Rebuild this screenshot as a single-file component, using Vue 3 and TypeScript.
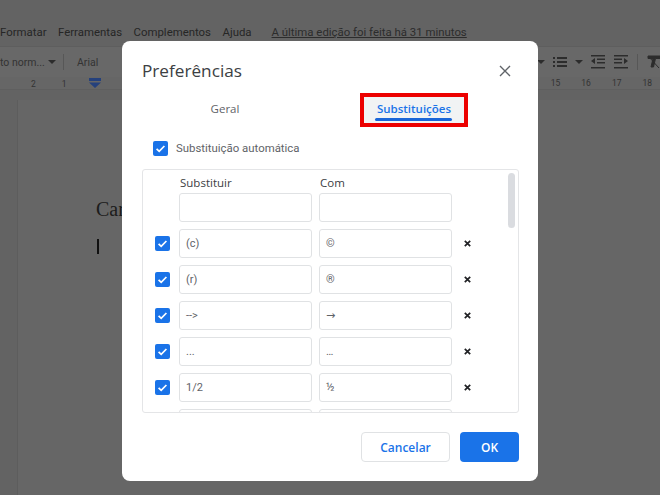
<script setup lang="ts">
const rows: { from: string; to: string }[] = [
  { from: '(c)', to: '©' },
  { from: '(r)', to: '®' },
  { from: '-->', to: '→' },
  { from: '...', to: '…' },
  { from: '1/2', to: '½' },
  { from: '', to: '' },
]
const menu = ['Formatar', 'Ferramentas', 'Complementos', 'Ajuda']
const leftTicks = ['2', '1']
const rightTicks = ['15', '16', '17', '18']
</script>

<template>
  <div class="page">
    <div class="topbar">
      <div class="menu">
        <span v-for="m in menu" :key="m">{{ m }}</span>
        <span class="edit">A última edição foi feita há 31 minutos</span>
      </div>
    </div>
    <div class="toolbar">
      <span class="style">to norm...</span>
      <span class="caret"></span>
      <span class="sep"></span>
      <span class="font">Arial</span>
      <div class="tools">
        <span class="caret"></span>
        <svg width="16" height="14" viewBox="0 0 16 14"><path d="M1 2h2v2H1zM1 6h2v2H1zM1 10h2v2H1zM5 2h10v2H5zM5 6h10v2H5zM5 10h10v2H5z" fill="#2c2c2c"/></svg>
        <span class="caret"></span>
        <svg width="16" height="14" viewBox="0 0 16 14"><path d="M1 0h14v1.500H1zM7 3.500h8V5H7zM7 7h8v1.500H7zM1 12h14v1.500H1zM5 3v6L1 6z" fill="#2c2c2c"/></svg>
        <svg width="16" height="14" viewBox="0 0 16 14"><path d="M1 0h14v1.500H1zM1 3.500h8V5H1zM1 7h8v1.500H1zM1 12h14v1.500H1zM11 3v6l4-3z" fill="#2c2c2c"/></svg>
        <span class="sep"></span>
        <svg width="16" height="14" viewBox="0 0 16 14"><path d="M2 1h12v2.500H9.500L7.500 12H5l2-8.500H2zM3 2l10 11" fill="#2c2c2c" stroke="#2c2c2c"/></svg>
      </div>
    </div>
    <div class="ruler">
      <div class="ticks left">
        <span v-for="t in leftTicks" :key="t">{{ t }}</span>
      </div>
      <svg class="marker" width="12" height="10" viewBox="0 0 12 10"><path d="M0 0h12v3H0zM0 4.500h12L6 10z" fill="#25417c"/></svg>
      <div class="ticks right">
        <svg class="marker-right" width="12" height="10" viewBox="0 0 12 10"><path d="M0 3h12L6 10z" fill="#25417c"/></svg>
        <span v-for="t in rightTicks" :key="t">{{ t }}</span>
      </div>
    </div>
    <div class="workspace">
      <div class="sheet">
        <p class="doc-title">Caro</p>
        <span class="cursor"></span>
      </div>
    </div>

    <section class="dialog">
      <header class="dialog-head">
        <h1>Preferências</h1>
        <svg class="close" width="12" height="12" viewBox="0 0 12 12"><path d="M1 1l10 10M11 1L1 11" stroke="#5f6368" stroke-width="1.400" fill="none"/></svg>
      </header>
      <nav class="tabs">
        <div class="tab">Geral</div>
        <div class="tab active">
          <span>Substituições</span>
          <i class="line"></i>
          <i class="highlight"></i>
        </div>
      </nav>
      <label class="auto">
        <span class="check"><svg width="15" height="15" viewBox="0 0 15 15"><path d="M3.600 7.800l2.600 2.600 5.200-5.400" stroke="#fff" stroke-width="1.700" fill="none"/></svg></span>
        <span>Substituição automática</span>
      </label>
      <div class="list">
        <div class="row head">
          <span class="cell-check"></span>
          <span class="col">Substituir</span>
          <span class="col">Com</span>
        </div>
        <div class="row">
          <span class="cell-check"></span>
          <div class="field"></div>
          <div class="field"></div>
        </div>
        <div v-for="(r, i) in rows" :key="i" class="row">
          <span class="cell-check">
            <span v-if="i < 5" class="check"><svg width="15" height="15" viewBox="0 0 15 15"><path d="M3.600 7.800l2.600 2.600 5.200-5.400" stroke="#fff" stroke-width="1.700" fill="none"/></svg></span>
          </span>
          <div class="field">{{ r.from }}</div>
          <div class="field">{{ r.to }}</div>
          <svg v-if="i < 5" class="remove" width="7" height="7" viewBox="0 0 7 7"><path d="M.8.800l5.400 5.400M6.200.800L.8 6.200" stroke="#202124" stroke-width="1.700" fill="none"/></svg>
        </div>
        <i class="scrollbar"></i>
      </div>
      <footer class="actions">
        <button class="btn cancel">Cancelar</button>
        <button class="btn ok">OK</button>
      </footer>
    </section>
  </div>
</template>

<style>
html, body { margin: 0; background: #666; }
</style>

<style scoped>
.page {
  position: relative;
  width: 660px;
  height: 495px;
  overflow: hidden;
  background: #666;
  font-family: Roboto, "Liberation Sans", sans-serif;
  color: #2b2b2b;
}
.topbar { height: 46px; background: #636363; box-sizing: border-box; padding-top: 24px; }
.menu { display: flex; font-size: 11.400px; line-height: 16px; color: #262626; }
.menu span { margin-right: 11.500px; }
.menu .edit { margin-left: 8.500px; text-decoration: underline; color: #2c2c2c; }
.toolbar {
  height: 31px;
  background: #686868;
  border-top: 1px solid #5e5e5e;
  box-sizing: border-box;
  display: flex;
  align-items: center;
  font-size: 10.500px;
  color: #333;
}
.style { width: 48px; white-space: nowrap; }
.caret {
  display: inline-block;
  width: 0;
  height: 0;
  border-left: 4px solid transparent;
  border-right: 4px solid transparent;
  border-top: 4px solid #2c2c2c;
}
.sep { display: inline-block; width: 1px; height: 16px; background: #575757; margin: 0 13px 0 7px; }
.font { width: 30px; }
.tools {
  margin-left: auto;
  margin-right: -2px;
  display: flex;
  align-items: center;
  gap: 7px;
}
.tools .sep { margin: 0 1px; }
.ruler {
  position: relative;
  height: 13px;
  background: #666;
  border-bottom: 1px solid #5f5f5f;
  font-size: 8.500px;
  line-height: 14px;
  color: #333;
  display: flex;
  justify-content: space-between;
  box-sizing: border-box;
}
.ticks { display: flex; }
.ticks.left { gap: 26px; padding-left: 31px; }
.ticks.right { gap: 21px; padding-right: 8px; align-items: center; }
.marker { position: absolute; left: 89px; top: 1px; }
.marker-right { margin-right: -2px; }
.workspace { height: 405px; background: #636363; padding-left: 17px; padding-top: 10px; }
.sheet {
  height: 405px;
  background: #666;
  border-left: 1px solid #5d5d5d;
  padding-left: 78px;
  position: relative;
}
.doc-title {
  margin: 0;
  padding-top: 97px;
  font-family: "Liberation Serif", serif;
  font-size: 20px;
  line-height: 24px;
  color: #1c1c1c;
}
.cursor { display: block; width: 2px; height: 15px; margin-top: 18px; margin-left: 1px; background: #111; }

.dialog {
  position: absolute;
  left: 122px;
  top: 41px;
  width: 416px;
  height: 440px;
  box-sizing: border-box;
  padding: 0 19px 0 20px;
  background: #fff;
  border-radius: 8px;
  display: flex;
  flex-direction: column;
}
.dialog-head {
  height: 52px;
  padding-top: 18px;
  box-sizing: border-box;
  display: flex;
  align-items: flex-start;
  justify-content: space-between;
}
h1 {
  margin: 0;
  font-family: "Open Sans", Roboto, sans-serif;
  font-weight: 400;
  font-size: 17.200px;
  line-height: 24px;
  color: #3c4043;
}
.close { margin: 6px 8px 0 0; }
.tabs { display: flex; height: 47px; }
.tab {
  position: relative;
  text-align: center;
  font-family: "Open Sans", Roboto, sans-serif;
  font-size: 11.500px;
  font-weight: 500;
  line-height: 16px;
  padding-top: 8px;
  color: #5f6368;
  box-sizing: border-box;
  width: 166px;
}
.tab.active {
  margin-left: 52px;
  width: 108px;
  height: 34px;
  background: #f1f3f4;
  color: #1a73e8;
  white-space: nowrap;
  font-weight: 600;
}
.tab.active span { display: block; width: 108px; }
.line {
  position: absolute;
  left: 15px;
  top: 25px;
  width: 77px;
  height: 3px;
  border-radius: 2px;
  background: #1a66d8;
}
.highlight {
  position: absolute;
  left: 0;
  top: 0;
  width: 108px;
  height: 34px;
  box-sizing: border-box;
  border: 4px solid #ec0000;
}
.auto {
  display: flex;
  align-items: center;
  gap: 8px;
  height: 16px;
  padding-left: 11px;
  font-size: 11.400px;
  color: #5f6368;
}
.check {
  width: 15px;
  height: 15px;
  background: #1a73e8;
  border-radius: 2px;
  display: block;
  flex: none;
}
.check svg { display: block; }
.list {
  position: relative;
  margin-top: 13px;
  width: 377px;
  height: 244px;
  box-sizing: border-box;
  border: 1px solid #e4e5e7;
  border-radius: 3px;
  overflow: hidden;
  padding-top: 3px;
  display: flex;
  flex-direction: column;
  gap: 7px;
  flex: none;
}
.row { display: flex; align-items: center; gap: 7px; height: 29px; flex: none; position: relative; }
.row.head { height: 19px; margin-bottom: -6px; font-family: "Open Sans", Roboto, sans-serif; font-size: 11.500px; color: #3c4043; font-weight: 500; }
.cell-check { margin-right: -7px; padding-left: 12px; width: 24px; flex: none; }
.col { width: 133px; padding-left: 1px; box-sizing: border-box; }
.field {
  width: 133px;
  height: 29px;
  box-sizing: border-box;
  border: 1px solid #e0e2e4;
  border-radius: 3px;
  padding: 0 6px;
  font-family: Roboto, "DejaVu Sans", sans-serif;
  font-size: 11px;
  line-height: 27px;
  color: #5f6368;
  flex: none;
}
.remove { margin-left: 4.500px; }
.scrollbar {
  position: absolute;
  right: 3px;
  top: 3px;
  width: 7px;
  height: 55px;
  border-radius: 4px;
  background: #dadce0;
}
.actions { display: flex; justify-content: flex-end; gap: 10px; margin-top: 19px; }
.btn {
  height: 30px;
  border-radius: 4px;
  font-family: "Open Sans", Roboto, sans-serif;
  font-size: 12px;
  font-weight: 600;
  padding: 0;
  box-sizing: border-box;
}
.cancel { width: 89px; background: #fff; border: 1px solid #e0e2e4; color: #1a73e8; }
.ok { width: 59px; background: #1a73e8; border: 0; color: #fff; }
</style>
